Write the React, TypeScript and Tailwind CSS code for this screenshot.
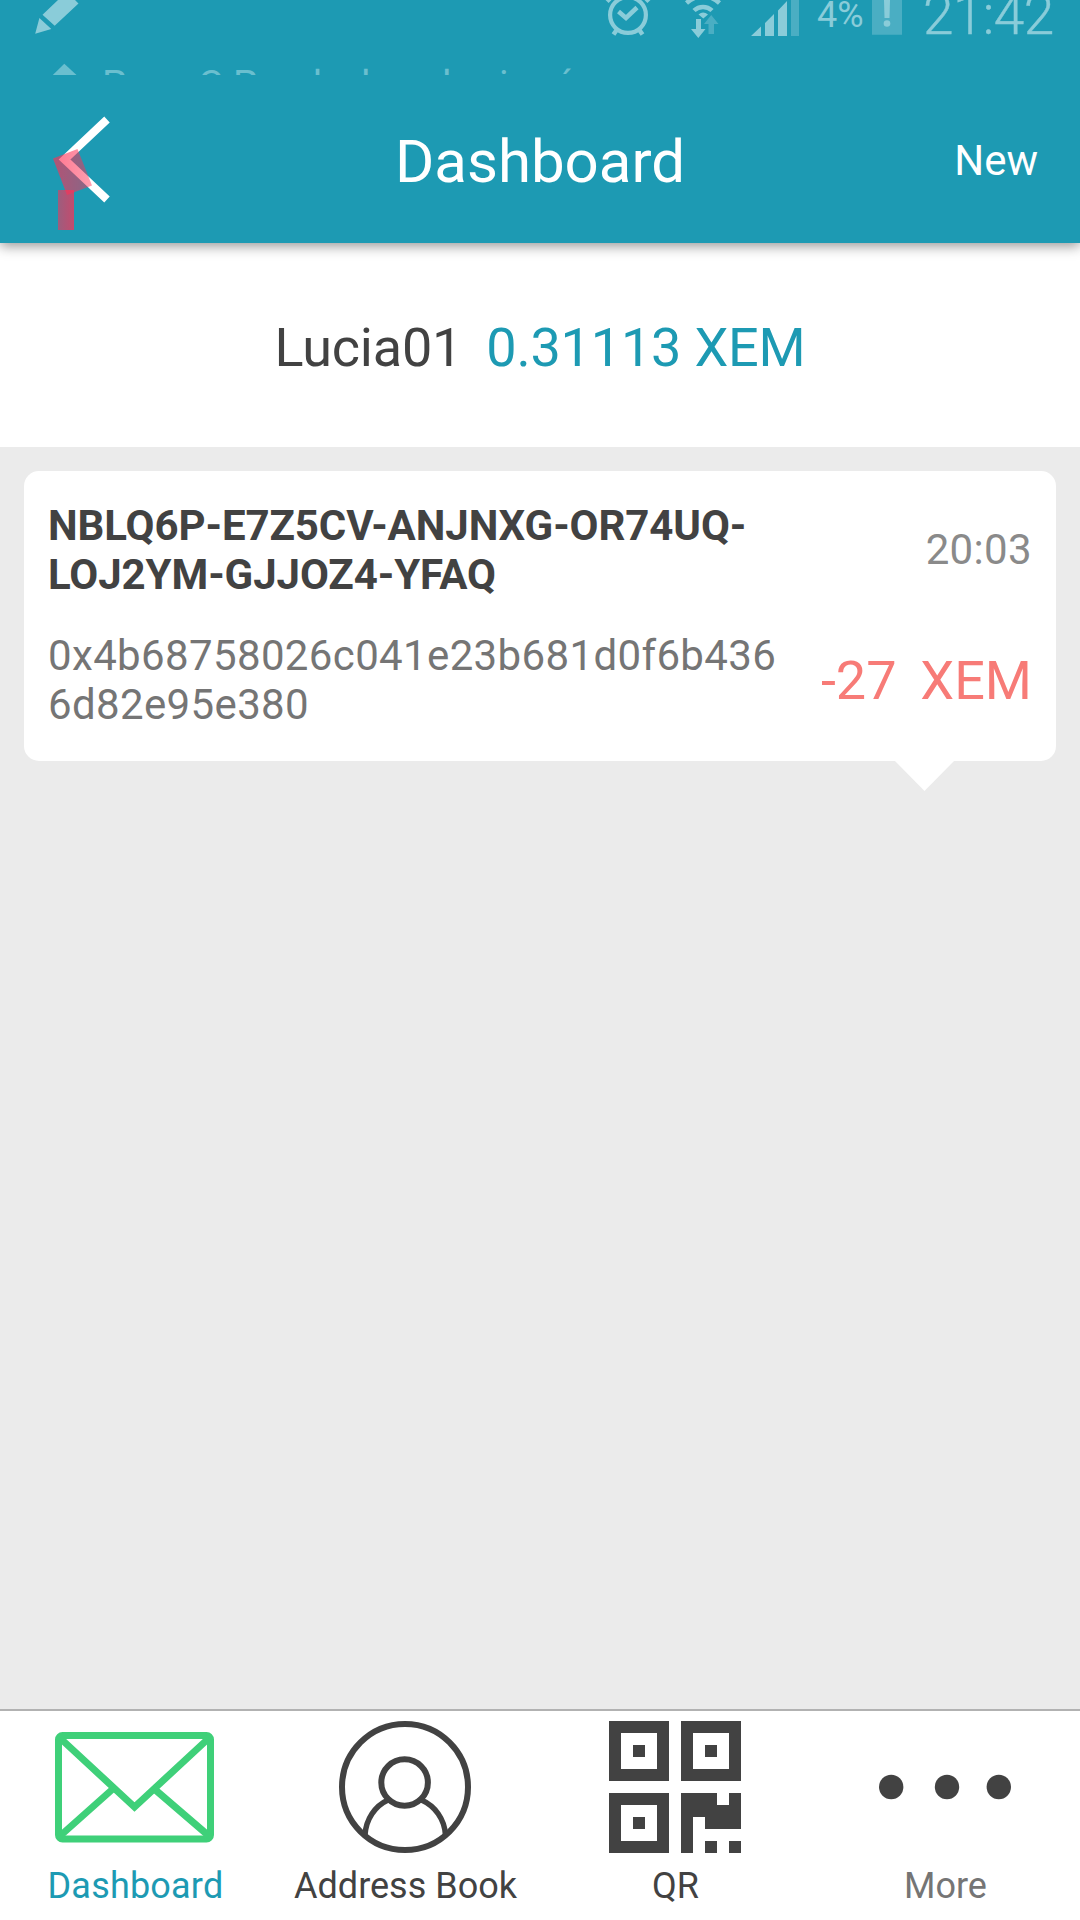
const tabs = [
  { label: "Dashboard", color: "text-[#1d9ab3] tracking-[0.2px]", icon: <MailIcon /> },
  { label: "Address Book", color: "text-[#424242]", icon: <PersonIcon /> },
  { label: "QR", color: "text-[#424242]", icon: <QrIcon /> },
  { label: "More", color: "text-[#757575]", icon: <MoreIcon /> },
];

function MailIcon() {
  return (
    <svg className="block h-33 w-[162px]" viewBox="0 0 162 132" fill="none" stroke="#3fd079" strokeWidth="7">
      <rect x="4.5" y="14.5" width="152" height="103.5" rx="4" />
      <path d="M6 17 80.500 86 155 17M6 115 61 66M155 115 98 66" />
    </svg>
  );
}

function PersonIcon() {
  return (
    <svg className="block h-33 w-33" viewBox="0 0 132 132" fill="none" stroke="#424242" strokeWidth="6">
      <circle cx="66" cy="66" r="63" />
      <circle cx="65.600" cy="61.500" r="23.300" />
      <path d="M49 79C36 85 27 98 26 114M82.500 79C96 85 105.500 98 106.500 114" strokeWidth="5.500" />
    </svg>
  );
}

function QrIcon() {
  return (
    <svg className="block h-33 w-33" viewBox="0 0 11 11" fill="#424242">
      <path
        fillRule="evenodd"
        d="M0 0h5v5H0zM1 1v3h3V1zM2 2h1v1H2zM6 0h5v5H6zM7 1v3h3V1zM8 2h1v1H8zM0 6h5v5H0zM1 7v3h3V7zM2 8h1v1H2zM6 6h3v1h1V6h1v3H8V8H7v3H6zM8 10h1v1H8zM10 10h1v1h-1z"
      />
    </svg>
  );
}

function MoreIcon() {
  return (
    <svg className="block h-33 w-33" viewBox="0 0 132 132" fill="#424242">
      <circle cx="12.200" cy="66" r="12.200" />
      <circle cx="68" cy="66" r="12.200" />
      <circle cx="119.800" cy="66" r="12.200" />
    </svg>
  );
}

function StatusBar() {
  return (
    <div className="relative h-[75px] overflow-hidden text-[#8accd9]">
      <svg className="absolute inset-0 h-[75px] w-[1080px]" viewBox="0 0 1080 75" fill="#8accd9">
        <path d="M58 0H75L78.500 3.500 54.700 25.700 42.500 14.700zM39.400 18 51.300 29 35.200 33.700z" />
        <path d="M64.300 63.700 76.500 75H52.800z" fill="#6abfcf" />
        <g fill="none" stroke="#8accd9">
          <circle cx="628" cy="15" r="17.900" strokeWidth="4.200" />
          <path d="M618.500 11.500 626 18 637 7.500" strokeWidth="4.500" />
          <path d="M617 29.500 613.500 34.500M639 29.500 642.500 34.500M607 1.500 610 -1.500M649 1.500 646 -1.500" strokeWidth="4.500" />
          <path d="M686.500 3A24 24 0 0 1 719.500 3" strokeWidth="4.500" />
          <path d="M694 10.500A13 13 0 0 1 712 10.500" strokeWidth="4.500" />
        </g>
        <path d="M698.500 14.500Q703 10.500 708 14.500L703.300 18.500z" />
        <path d="M696 19h5v10h4.500L698.300 38 691 29h5z" />
        <path d="M711.200 15 718.500 24H714V34h-5.500V24H704z" fill="#4aaec3" />
        <path d="M751 36 761 26.500V36zM765 36V23L774 14V36zM778 36V10.500L787 1V36z" />
        <path d="M791 0h8v36h-8z" fill="#4aaec3" />
        <path d="M872 0h30v34.700h-30z" fill="#4aaec3" />
        <path d="M884 0h6l-.5 18h-5z" />
        <circle cx="887" cy="23.500" r="3.300" />
      </svg>
      <span className="absolute left-[817px] top-[-6px] text-[36px] leading-[42px]">4%</span>
      <span className="absolute left-[923px] top-[-17px] text-[55px] leading-[65px] font-light tracking-[-0.6px] [-webkit-text-stroke:0.4px_#8accd9]">
        21:42
      </span>
      <div className="absolute left-0 top-[62px] text-[39px] leading-[46px] text-[#6abfcf]">
        <span className="absolute left-[102px]">Paso</span>
        <span className="absolute left-[198px]">C</span>
        <span className="absolute left-[233px]">Prueba</span>
        <span className="absolute left-[361px]">la</span>
        <span className="absolute left-[442px]">la</span>
        <span className="absolute left-[499px]">i</span>
        <span className="absolute left-[554px]">ó</span>
      </div>
    </div>
  );
}

export default function App() {
  return (
    <div className="flex h-[1920px] w-[1080px] flex-col overflow-hidden bg-[#ebebeb] font-[Roboto,sans-serif]">
      <header className="relative z-10 h-[243px] shrink-0 bg-[#1d9ab3] text-white shadow-[0_3px_12px_rgba(0,0,0,0.42)]">
        <StatusBar />
        <div className="grid h-[172px] grid-cols-[1fr_auto_1fr] items-center pr-[43px] pl-[43px]">
          <svg className="h-[132px] w-[70px]" viewBox="43 95 70 132">
            <path d="M107 119.500 64.500 159.500 107 199.500" fill="none" stroke="white" strokeWidth="8" />
          </svg>
          <h1 className="pt-0.5 text-[60px] leading-[70px]">Dashboard</h1>
          <button className="-mr-px justify-self-end pb-0.5 text-[42px] leading-[49px]">New</button>
        </div>
        <svg className="absolute left-[50px] top-[145px] h-[90px] w-[50px]" viewBox="50 145 50 90">
          <defs>
            <linearGradient id="headTint">
              <stop offset="0" stopColor="#ff2f55" stopOpacity="0.66" />
              <stop offset="1" stopColor="#ff2f55" stopOpacity="0.46" />
            </linearGradient>
            <linearGradient id="stemTint">
              <stop offset="0" stopColor="#ff2f55" stopOpacity="0.56" />
              <stop offset="1" stopColor="#ff2f55" stopOpacity="0.74" />
            </linearGradient>
          </defs>
          <path d="M53 158.500 77.500 149 92 185.500 67 195z" fill="url(#headTint)" />
          <path d="M58 190H74V230H58z" fill="url(#stemTint)" />
        </svg>
      </header>

      <section className="flex h-[204px] shrink-0 items-center justify-center gap-6 bg-white pt-[5px] text-[54px] leading-[64px] tracking-[-0.2px]">
        <span className="text-[#424242]">Lucia01</span>
        <span className="text-[#1d9ab3]">0.31113 XEM</span>
      </section>

      <main className="flex-1 p-6">
        <article className="relative grid h-[290px] grid-cols-[1fr_auto] grid-rows-[98px_98px] content-start items-center gap-y-8 rounded-[15px] bg-white px-6 pt-[30px] text-[42px] leading-[49px]">
          <p className="font-bold tracking-[-0.09px] text-[#424242]">
            NBLQ6P-E7Z5CV-ANJNXG-OR74UQ-
            <br />
            LOJ2YM-GJJOZ4-YFAQ
          </p>
          <time className="pb-0.5 text-right tracking-[0.35px] text-[#8a8a8a]">20:03</time>
          <p className="tracking-[0.36px] text-[#757575]">
            0x4b68758026c041e23b681d0f6b436
            <br />
            6d82e95e380
          </p>
          <p className="whitespace-pre pt-0.5 text-[54px] leading-[64px] [word-spacing:-1.5px] text-[#f77b77]">-27  XEM</p>
          <svg className="absolute left-[870px] top-[289px] h-[31px] w-[62px]" viewBox="0 0 62 31" fill="white">
            <path d="M0 0H61L30.500 31z" />
          </svg>
        </article>
      </main>

      <nav className="grid h-[211px] shrink-0 grid-cols-4 border-t-2 border-[#b2b2b2] bg-white pt-2.5">
        {tabs.map((tab) => (
          <button key={tab.label} className="flex flex-col items-center gap-3">
            {tab.icon}
            <span className={`pl-px text-[36px] leading-[42px] ${tab.color}`}>{tab.label}</span>
          </button>
        ))}
      </nav>
    </div>
  );
}
